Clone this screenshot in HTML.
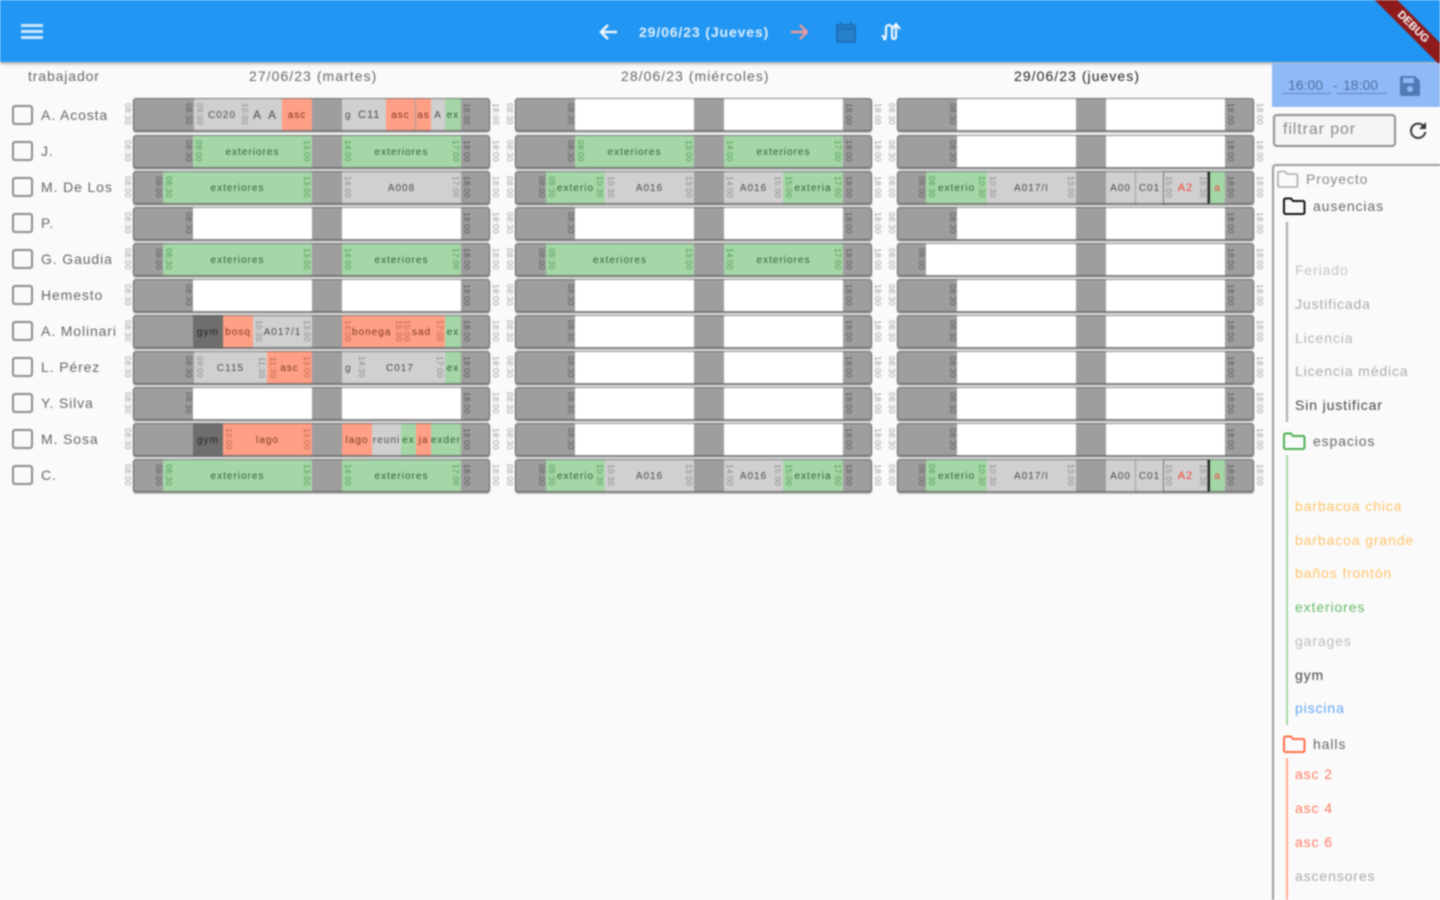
<!DOCTYPE html>
<html lang="es"><head><meta charset="utf-8"><title>Agenda</title>
<style>
html,body{margin:0;padding:0;width:1440px;height:900px;overflow:hidden;background:#fafafa}
#p{position:relative;width:1440px;height:900px;overflow:hidden;background:#fafafa;font-family:"Liberation Sans",sans-serif;filter:blur(.7px);color:#666}
#p div,#p span,#p svg,#p b,#p i{position:absolute}
.tx{white-space:nowrap;font-size:14px;line-height:16px;letter-spacing:.88px}
.cb{left:12px;width:17px;height:16px;border:2px solid #8a8a8a;border-radius:3px}
.r{width:357px;height:33px;background:#9e9e9e;border-radius:3px;box-shadow:0 1px 1px rgba(0,0,0,.35),0 2px 1px rgba(0,0,0,.2)}
.r::after{content:"";position:absolute;left:0;top:0;right:0;bottom:0;border-radius:3px;box-shadow:inset 0 0 0 1px rgba(85,85,85,.7);pointer-events:none}
.d1{left:133px}.d2{left:515px}.d3{left:897px}
.y0{top:98px}.y1{top:135px}.y2{top:171px}.y3{top:207px}.y4{top:243px}.y5{top:279px}.y6{top:315px}.y7{top:351px}.y8{top:387px}.y9{top:423px}.y10{top:459px}
.s{top:0;height:33px;font-weight:normal;font-size:10px;letter-spacing:1px;line-height:35px;text-align:center;color:#4a4a4a;overflow:hidden;white-space:nowrap}
.w{background:#fff}.g{background:#a5d6a7;color:#2f5f33}.o{background:#ff9f85;color:#7a3a20}.l{background:#d0d0d0}.k{background:#6e6e6e;color:#222}
.p1{left:60px;width:119px}.p2{left:209px;width:119px}
.t{top:3px;height:27px;width:9px;writing-mode:vertical-rl;font-style:normal;font-size:8px;letter-spacing:.4px;line-height:9px;text-align:center;color:#555;overflow:hidden;white-space:nowrap}
.g .t{color:#4e9a52}.o .t{color:#b5654a}.l .t{color:#888}
.ol{left:-10px;color:#999}.or{left:358px;color:#999}.il{left:51px}.ir{left:329px}
.a{left:1px}.z{right:1px}
.n{font-size:14px;line-height:16px;letter-spacing:.88px;white-space:nowrap;left:1295px}
</style></head><body><div id="p">

<div style="left:0;top:0;width:1440px;height:62px;background:#2196f3;box-shadow:0 2px 3px rgba(0,0,0,.3)"></div>
<svg style="left:21px;top:24px" width="22" height="16"><path d="M0 1.5h22M0 7.5h22M0 13.5h22" stroke="#cfe6fb" stroke-width="3"/></svg>
<svg style="left:598px;top:23px" width="20" height="18"><path d="M19 9H3M10 2L3 9l7 7" fill="none" stroke="#eef6fe" stroke-width="2.6"/></svg>
<div class="tx" style="left:639px;top:24px;color:#dcedfc;font-weight:bold;font-size:14px;letter-spacing:.88px">29/06/23 (Jueves)</div>
<svg style="left:790px;top:23px" width="20" height="18"><path d="M1 9h16M10 2l7 7-7 7" fill="none" stroke="#ef9a9a" stroke-width="2.4"/></svg>
<svg style="left:835px;top:21px" width="22" height="22"><rect x="2" y="4" width="18" height="17" rx="1" fill="#2680cc" stroke="#1c6fb8" stroke-width="2"/><path d="M2 8h18M6 1v4M16 1v4" stroke="#1c6fb8" stroke-width="2"/></svg>
<svg style="left:880px;top:21px" width="24" height="22"><path d="M3 18c3 0 3-2 3-6V7a3 3 0 0 1 6 0v9M12 16a2 2 0 0 0 4 0V4M12 8l4-5 4 5" fill="none" stroke="#f2f8ff" stroke-width="2.2"/><path d="M2 14l4 5" stroke="#f2f8ff" stroke-width="2"/></svg>
<div style="left:1358px;top:19px;width:110px;height:16px;background:#8e1b1b;transform:rotate(45deg);color:#fff;font-size:11px;line-height:16px;font-weight:bold;text-align:center">DEBUG</div>

<div class="tx" style="left:28px;top:68px">trabajador</div>
<div class="tx" style="left:249px;top:68px;letter-spacing:1.05px">27/06/23 (martes)</div>
<div class="tx" style="left:621px;top:68px;letter-spacing:1.05px">28/06/23 (miércoles)</div>
<div class="tx" style="left:1014px;top:68px;color:#222;letter-spacing:1.05px">29/06/23 (jueves)</div>

<div class="cb" style="top:105px"></div><div class="tx" style="left:41px;top:107px">A. Acosta</div>
<div class="cb" style="top:141px"></div><div class="tx" style="left:41px;top:143px">J.</div>
<div class="cb" style="top:177px"></div><div class="tx" style="left:41px;top:179px">M. De Los</div>
<div class="cb" style="top:213px"></div><div class="tx" style="left:41px;top:215px">P.</div>
<div class="cb" style="top:249px"></div><div class="tx" style="left:41px;top:251px">G. Gaudia</div>
<div class="cb" style="top:285px"></div><div class="tx" style="left:41px;top:287px">Hemesto</div>
<div class="cb" style="top:321px"></div><div class="tx" style="left:41px;top:323px">A. Molinari</div>
<div class="cb" style="top:357px"></div><div class="tx" style="left:41px;top:359px">L. Pérez</div>
<div class="cb" style="top:393px"></div><div class="tx" style="left:41px;top:395px">Y. Silva</div>
<div class="cb" style="top:429px"></div><div class="tx" style="left:41px;top:431px">M. Sosa</div>
<div class="cb" style="top:465px"></div><div class="tx" style="left:41px;top:467px">C.</div>

<!-- day 1 -->
<div class="r d1 y0"><i class="t ol">08:30</i><i class="t or">18:00</i><i class="t il">08:30</i><i class="t ir">18:00</i>
<b class="s l" style="left:61px;width:88px"><i class="t a">09:00</i><span style="left:14px;top:0">C020</span><i class="t" style="left:46px">10:00</i><span style="left:59px;top:0;font-size:12px">A</span><span style="left:74px;top:0;font-size:12px">A</span></b>
<b class="s o" style="left:149px;width:30px">asc</b>
<b class="s l" style="left:209px;width:44px"><span style="left:3px;top:0">g</span><span style="left:16px;top:0;font-size:11px">C11</span></b>
<b class="s o" style="left:253px;width:29px">asc</b><b class="s o" style="left:283px;width:15px">as</b>
<b class="s l" style="left:298px;width:14px">A</b><b class="s g" style="left:312px;width:16px">ex</b></div>

<div class="r d1 y1"><i class="t ol">08:30</i><i class="t or">18:00</i><i class="t il">08:30</i><i class="t ir">18:00</i>
<b class="s g p1"><i class="t a">09:00</i><i class="t z">13:00</i>exteriores</b><b class="s g p2"><i class="t a">14:00</i><i class="t z">17:00</i>exteriores</b></div>

<div class="r d1 y2"><i class="t ol">08:00</i><i class="t or">18:00</i><i class="t" style="left:21px">08:00</i><i class="t ir">18:00</i>
<b class="s g" style="left:30px;width:149px"><i class="t a">08:30</i><i class="t z">13:00</i>exteriores</b><b class="s l p2"><i class="t a">14:00</i><i class="t z">17:00</i>A008</b></div>

<div class="r d1 y3"><i class="t ol">08:30</i><i class="t or">18:00</i><i class="t il">08:30</i><i class="t ir">18:00</i><b class="s w p1"></b><b class="s w p2"></b></div>

<div class="r d1 y4"><i class="t ol">08:00</i><i class="t or">18:00</i><i class="t" style="left:21px">08:00</i><i class="t ir">18:00</i>
<b class="s g" style="left:30px;width:149px"><i class="t a">08:30</i><i class="t z">13:00</i>exteriores</b><b class="s g p2"><i class="t a">14:00</i><i class="t z">17:00</i>exteriores</b></div>

<div class="r d1 y5"><i class="t ol">08:30</i><i class="t or">18:00</i><i class="t il">08:30</i><i class="t ir">18:00</i><b class="s w p1"></b><b class="s w p2"></b></div>

<div class="r d1 y6"><i class="t ol">08:30</i><i class="t or">18:00</i><i class="t ir">18:00</i>
<b class="s k" style="left:60px;width:30px">gym</b><b class="s o" style="left:90px;width:30px">bosq</b><b class="s l" style="left:120px;width:59px"><i class="t a">10:30</i><i class="t z">13:00</i>A017/1</b>
<b class="s o" style="left:209px;width:103px"><i class="t a">14:00</i><i class="t" style="left:52px">15:00</i><i class="t" style="left:60px">15:00</i><i class="t z">17:00</i><span style="left:10px;top:0">bonega</span><span style="left:70px;top:0">sad</span></b><b class="s g" style="left:312px;width:16px">ex</b></div>

<div class="r d1 y7"><i class="t ol">08:30</i><i class="t or">18:00</i><i class="t il">08:30</i><i class="t ir">18:00</i>
<b class="s l" style="left:61px;width:73px"><i class="t a">09:00</i><i class="t z">11:30</i>C115</b><b class="s o" style="left:134px;width:45px"><i class="t a">11:30</i><i class="t z">13:00</i>asc</b>
<b class="s l" style="left:209px;width:103px"><span style="left:3px;top:0">g</span><i class="t" style="left:15px">14:30</i><i class="t z">17:00</i><span style="left:44px;top:0">C017</span></b><b class="s g" style="left:312px;width:16px">ex</b></div>

<div class="r d1 y8"><i class="t ol">08:30</i><i class="t or">18:00</i><i class="t il">08:30</i><i class="t ir">18:00</i><b class="s w p1"></b><b class="s w p2"></b></div>

<div class="r d1 y9"><i class="t ol">08:30</i><i class="t or">18:00</i><i class="t ir">18:00</i>
<b class="s k" style="left:60px;width:30px">gym</b><b class="s o" style="left:90px;width:89px"><i class="t a">10:00</i><i class="t z">13:00</i>lago</b>
<b class="s o" style="left:209px;width:30px">lago</b><b class="s l" style="left:239px;width:29px">reuni</b><b class="s g" style="left:268px;width:15px">ex</b><b class="s o" style="left:283px;width:15px">ja</b><b class="s g" style="left:298px;width:30px">exder</b></div>

<div class="r d1 y10"><i class="t ol">08:00</i><i class="t or">18:00</i><i class="t" style="left:21px">08:00</i><i class="t ir">18:00</i>
<b class="s g" style="left:30px;width:149px"><i class="t a">08:30</i><i class="t z">13:00</i>exteriores</b><b class="s g p2"><i class="t a">14:00</i><i class="t z">17:00</i>exteriores</b></div>

<!-- day 2 -->
<div class="r d2 y0"><i class="t ol">08:30</i><i class="t or">18:00</i><i class="t il">08:30</i><i class="t ir">18:00</i><b class="s w p1"></b><b class="s w p2"></b></div>
<div class="r d2 y1"><i class="t ol">08:30</i><i class="t or">18:00</i><i class="t il">08:30</i><i class="t ir">18:00</i><b class="s g p1"><i class="t a">09:00</i><i class="t z">13:00</i>exteriores</b><b class="s g p2"><i class="t a">14:00</i><i class="t z">17:00</i>exteriores</b></div>
<div class="r d2 y2"><i class="t ol">08:00</i><i class="t or">18:00</i><i class="t" style="left:22px">08:00</i><i class="t ir">18:00</i><b class="s g" style="left:31px;width:59px"><i class="t a">08:30</i><i class="t z">10:30</i>exterio</b><b class="s l" style="left:90px;width:89px"><i class="t a">10:30</i><i class="t z">13:00</i>A016</b><b class="s l" style="left:209px;width:59px"><i class="t a">14:00</i><i class="t z">15:00</i>A016</b><b class="s g" style="left:268px;width:60px"><i class="t a">15:00</i><i class="t z">17:00</i>exteria</b></div>
<div class="r d2 y3"><i class="t ol">08:30</i><i class="t or">18:00</i><i class="t il">08:30</i><i class="t ir">18:00</i><b class="s w p1"></b><b class="s w p2"></b></div>
<div class="r d2 y4"><i class="t ol">08:00</i><i class="t or">18:00</i><i class="t" style="left:22px">08:00</i><i class="t ir">18:00</i><b class="s g" style="left:31px;width:148px"><i class="t a">08:30</i><i class="t z">13:00</i>exteriores</b><b class="s g p2"><i class="t a">14:00</i><i class="t z">17:00</i>exteriores</b></div>
<div class="r d2 y5"><i class="t ol">08:30</i><i class="t or">18:00</i><i class="t il">08:30</i><i class="t ir">18:00</i><b class="s w p1"></b><b class="s w p2"></b></div>
<div class="r d2 y6"><i class="t ol">08:30</i><i class="t or">18:00</i><i class="t il">08:30</i><i class="t ir">18:00</i><b class="s w p1"></b><b class="s w p2"></b></div>
<div class="r d2 y7"><i class="t ol">08:30</i><i class="t or">18:00</i><i class="t il">08:30</i><i class="t ir">18:00</i><b class="s w p1"></b><b class="s w p2"></b></div>
<div class="r d2 y8"><i class="t ol">08:30</i><i class="t or">18:00</i><i class="t il">08:30</i><i class="t ir">18:00</i><b class="s w p1"></b><b class="s w p2"></b></div>
<div class="r d2 y9"><i class="t ol">08:30</i><i class="t or">18:00</i><i class="t il">08:30</i><i class="t ir">18:00</i><b class="s w p1"></b><b class="s w p2"></b></div>
<div class="r d2 y10"><i class="t ol">08:00</i><i class="t or">18:00</i><i class="t" style="left:22px">08:00</i><i class="t ir">18:00</i><b class="s g" style="left:31px;width:59px"><i class="t a">08:30</i><i class="t z">10:30</i>exterio</b><b class="s l" style="left:90px;width:89px"><i class="t a">10:30</i><i class="t z">13:00</i>A016</b><b class="s l" style="left:209px;width:59px"><i class="t a">14:00</i><i class="t z">15:00</i>A016</b><b class="s g" style="left:268px;width:60px"><i class="t a">15:00</i><i class="t z">17:00</i>exteria</b></div>

<!-- day 3 -->
<div class="r d3 y0"><i class="t ol">08:30</i><i class="t or">18:00</i><i class="t il">08:30</i><i class="t ir">18:00</i><b class="s w p1"></b><b class="s w p2"></b></div>
<div class="r d3 y1"><i class="t ol">08:30</i><i class="t or">18:00</i><i class="t il">08:30</i><i class="t ir">18:00</i><b class="s w p1"></b><b class="s w p2"></b></div>
<div class="r d3 y2"><i class="t ol">08:00</i><i class="t or">18:00</i><i class="t" style="left:20px">08:00</i><i class="t ir">18:00</i><b class="s g" style="left:29px;width:61px"><i class="t a">08:30</i><i class="t z">10:30</i>exterio</b><b class="s l" style="left:90px;width:89px"><i class="t a">10:30</i><i class="t z">13:00</i>A017/I</b><b class="s l" style="left:209px;width:29px">A00</b><b class="s l" style="left:239px;width:27px">C01</b><b class="s l" style="left:266px;width:45px;box-shadow:inset 0 0 0 1px #777;color:#f44336;font-size:11px"><i class="t a">15:00</i><i class="t z">16:30</i>A2</b><b class="s g" style="left:311px;width:17px;border-left:2px solid #222;box-sizing:border-box;color:#f44336">a</b></div>
<div class="r d3 y3"><i class="t ol">08:30</i><i class="t or">18:00</i><i class="t il">08:30</i><i class="t ir">18:00</i><b class="s w p1"></b><b class="s w p2"></b></div>
<div class="r d3 y4"><i class="t ol">08:00</i><i class="t or">18:00</i><i class="t" style="left:20px">08:00</i><i class="t ir">18:00</i><b class="s w" style="left:29px;width:150px"></b><b class="s w p2"></b></div>
<div class="r d3 y5"><i class="t ol">08:30</i><i class="t or">18:00</i><i class="t il">08:30</i><i class="t ir">18:00</i><b class="s w p1"></b><b class="s w p2"></b></div>
<div class="r d3 y6"><i class="t ol">08:30</i><i class="t or">18:00</i><i class="t il">08:30</i><i class="t ir">18:00</i><b class="s w p1"></b><b class="s w p2"></b></div>
<div class="r d3 y7"><i class="t ol">08:30</i><i class="t or">18:00</i><i class="t il">08:30</i><i class="t ir">18:00</i><b class="s w p1"></b><b class="s w p2"></b></div>
<div class="r d3 y8"><i class="t ol">08:30</i><i class="t or">18:00</i><i class="t il">08:30</i><i class="t ir">18:00</i><b class="s w p1"></b><b class="s w p2"></b></div>
<div class="r d3 y9"><i class="t ol">08:30</i><i class="t or">18:00</i><i class="t il">08:30</i><i class="t ir">18:00</i><b class="s w p1"></b><b class="s w p2"></b></div>
<div class="r d3 y10"><i class="t ol">08:00</i><i class="t or">18:00</i><i class="t" style="left:20px">08:00</i><i class="t ir">18:00</i><b class="s g" style="left:29px;width:61px"><i class="t a">08:30</i><i class="t z">10:30</i>exterio</b><b class="s l" style="left:90px;width:89px"><i class="t a">10:30</i><i class="t z">13:00</i>A017/I</b><b class="s l" style="left:209px;width:29px">A00</b><b class="s l" style="left:239px;width:27px">C01</b><b class="s l" style="left:266px;width:45px;box-shadow:inset 0 0 0 1px #777;color:#f44336;font-size:11px"><i class="t a">15:00</i><i class="t z">16:30</i>A2</b><b class="s g" style="left:311px;width:17px;border-left:2px solid #222;box-sizing:border-box;color:#f44336">a</b></div>

<!-- right panel -->
<div style="left:1272px;top:63px;width:168px;height:44px;background:#90b9f7"></div>
<div class="tx" style="left:1288px;top:77px;color:#4f6f9f;letter-spacing:0">16:00</div><div class="tx" style="left:1333px;top:77px;color:#4f6f9f;letter-spacing:0">-</div><div class="tx" style="left:1343px;top:77px;color:#4f6f9f;letter-spacing:0">18:00</div>
<div style="left:1282px;top:93px;width:49px;height:1px;background:#5f86c4"></div>
<div style="left:1337px;top:93px;width:50px;height:1px;background:#5f86c4"></div>
<svg style="left:1399px;top:75px" width="22" height="22"><path d="M1 3a2 2 0 0 1 2-2h13l5 5v13a2 2 0 0 1-2 2H3a2 2 0 0 1-2-2z" fill="#517ab5"/><rect x="4" y="3" width="11" height="5" fill="#90b9f7"/><circle cx="11" cy="14" r="3" fill="#90b9f7"/></svg>
<div style="left:1273px;top:114px;width:119px;height:29px;border:2px solid #8f8f8f;border-radius:4px;background:#f5f5f5"></div>
<div class="tx" style="left:1283px;top:121px;font-size:16px;line-height:18px;color:#8a8a8a;letter-spacing:.9px">filtrar por</div>
<svg style="left:1408px;top:120px" width="20" height="20"><path d="M16 6.5A7.2 7.2 0 1 0 17.3 12" fill="none" stroke="#333" stroke-width="2"/><path d="M18 2v7h-7z" fill="#333"/></svg>

<div style="left:1272px;top:164px;width:180px;height:740px;border:2px solid #9a9a9a;border-radius:4px;box-sizing:border-box"></div>
<svg style="left:1277px;top:170px" width="22" height="18"><path d="M1 3a1.5 1.5 0 0 1 1.5-1.5H8l2 2.5h9A1.5 1.5 0 0 1 20.5 5.5v10a1.5 1.5 0 0 1-1.5 1.5H2.5A1.5 1.5 0 0 1 1 15.5z" fill="none" stroke="#aaa" stroke-width="1.6"/></svg>
<div class="tx" style="left:1306px;top:171px;color:#888">Proyecto</div>
<svg style="left:1283px;top:197px" width="23" height="18"><path d="M1 3a1.5 1.5 0 0 1 1.5-1.5H8l2 2.5h10A1.5 1.5 0 0 1 21.5 5.5v10a1.5 1.5 0 0 1-1.5 1.5H2.5A1.5 1.5 0 0 1 1 15.5z" fill="none" stroke="#111" stroke-width="2"/></svg>
<div class="tx" style="left:1313px;top:198px">ausencias</div>
<div style="left:1286px;top:222px;width:2px;height:200px;background:#aaa"></div>
<div class="n" style="top:262px;color:#c4c4c4">Feriado</div>
<div class="n" style="top:296px;color:#aaa">Justificada</div>
<div class="n" style="top:330px;color:#b4b4b4">Licencia</div>
<div class="n" style="top:363px;color:#aaa">Licencia médica</div>
<div class="n" style="top:397px;color:#444">Sin justificar</div>
<svg style="left:1283px;top:432px" width="23" height="18"><path d="M1 3a1.5 1.5 0 0 1 1.5-1.5H8l2 2.5h10A1.5 1.5 0 0 1 21.5 5.5v10a1.5 1.5 0 0 1-1.5 1.5H2.5A1.5 1.5 0 0 1 1 15.5z" fill="none" stroke="#4caf50" stroke-width="2"/></svg>
<div class="tx" style="left:1313px;top:433px">espacios</div>
<div style="left:1286px;top:455px;width:2px;height:270px;background:#a5d6a7"></div>
<div class="n" style="top:498px;color:#ffc46b">barbacoa chica</div>
<div class="n" style="top:532px;color:#ffc46b">barbacoa grande</div>
<div class="n" style="top:565px;color:#ffc46b">baños frontón</div>
<div class="n" style="top:599px;color:#66bb6a">exteriores</div>
<div class="n" style="top:633px;color:#bbb">garages</div>
<div class="n" style="top:667px;color:#444">gym</div>
<div class="n" style="top:700px;color:#64a5f5">piscina</div>
<svg style="left:1283px;top:735px" width="23" height="18"><path d="M1 3a1.5 1.5 0 0 1 1.5-1.5H8l2 2.5h10A1.5 1.5 0 0 1 21.5 5.5v10a1.5 1.5 0 0 1-1.5 1.5H2.5A1.5 1.5 0 0 1 1 15.5z" fill="none" stroke="#ff6e4a" stroke-width="2"/></svg>
<div class="tx" style="left:1313px;top:736px">halls</div>
<div style="left:1286px;top:758px;width:2px;height:142px;background:#ffab91"></div>
<div class="n" style="top:766px;color:#ff7961">asc 2</div>
<div class="n" style="top:800px;color:#ff7961">asc 4</div>
<div class="n" style="top:834px;color:#ff7961">asc 6</div>
<div class="n" style="top:868px;color:#aaa">ascensores</div>

</div></body></html>
